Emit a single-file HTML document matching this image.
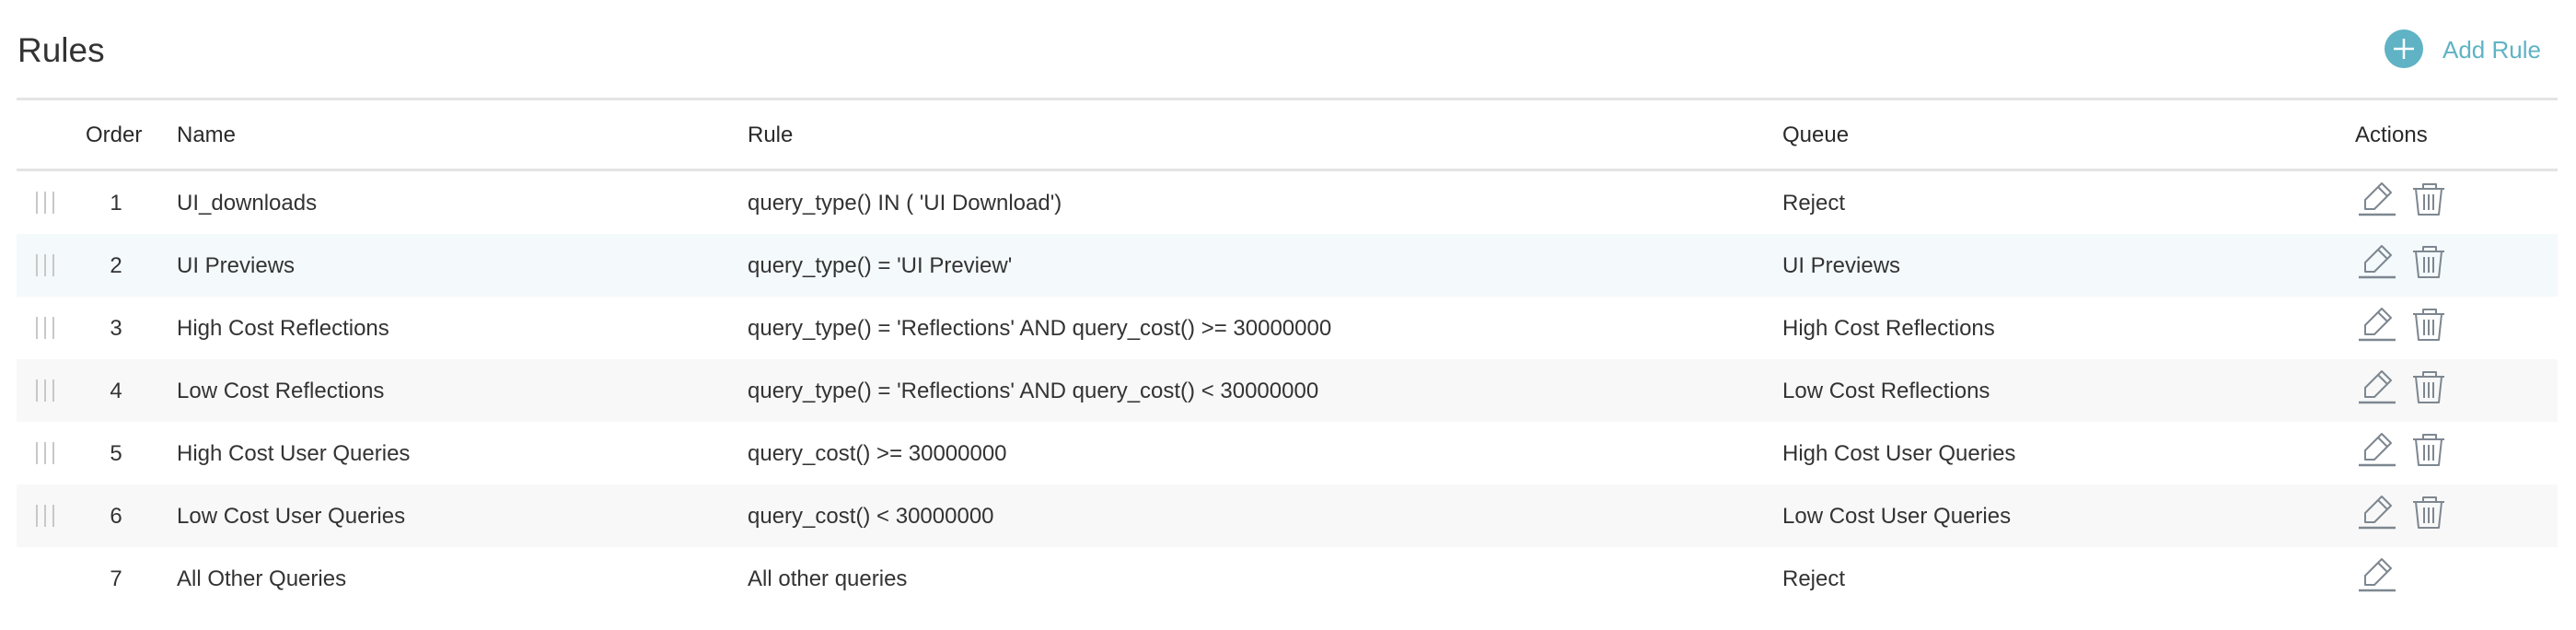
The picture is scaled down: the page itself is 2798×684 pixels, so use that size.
<!DOCTYPE html>
<html><head><meta charset="utf-8"><style>
*{margin:0;padding:0;box-sizing:border-box}
body{width:2798px;height:684px;background:#fff;position:relative;overflow:hidden;font-family:"Liberation Sans",Arial,sans-serif;color:#333}
.a{position:absolute;white-space:nowrap}
.t{font-size:37px;left:19px;top:34px;color:#333}
.line{position:absolute;left:18px;width:2760px;height:3px;background:#e4e4e4}
.h{font-size:24px;top:133px;color:#2a2a2a}
.row{position:absolute;left:18px;width:2760px;height:68px}
.c{font-size:24px;color:#333}
.drag{position:absolute;left:39px;width:20px;height:24px}
.drag i{position:absolute;top:0;width:2px;height:24px;background:#c8c8c8}
</style></head><body>
<div class="a t">Rules</div>
<svg class="a" style="left:2590px;top:32px" width="42" height="42" viewBox="0 0 42 42"><circle cx="21" cy="21" r="21" fill="#5fb3c4"/><path d="M21 10V32M10 21H32" stroke="#fff" stroke-width="2.5"/></svg>
<div class="a" style="left:2653px;top:39px;font-size:26px;color:#5fb3c4">Add Rule</div>
<div class="line" style="top:106px"></div>
<div class="line" style="top:183px"></div>
<div class="a h" style="left:93px">Order</div>
<div class="a h" style="left:192px">Name</div>
<div class="a h" style="left:812px">Rule</div>
<div class="a h" style="left:1936px">Queue</div>
<div class="a h" style="left:2558px">Actions</div>

<div class="row" style="top:254px;background:#f4f9fc"></div>
<div class="row" style="top:390px;background:#f8f8f8"></div>
<div class="row" style="top:526px;background:#f8f8f8"></div>

<div id="rows"></div>
<script>
var d=[["1","UI_downloads","query_type() IN ( 'UI Download')","Reject"],
["2","UI Previews","query_type() = 'UI Preview'","UI Previews"],
["3","High Cost Reflections","query_type() = 'Reflections' AND query_cost() >= 30000000","High Cost Reflections"],
["4","Low Cost Reflections","query_type() = 'Reflections' AND query_cost() < 30000000","Low Cost Reflections"],
["5","High Cost User Queries","query_cost() >= 30000000","High Cost User Queries"],
["6","Low Cost User Queries","query_cost() < 30000000","Low Cost User Queries"],
["7","All Other Queries","All other queries","Reject"]];
var h="";
function esc(s){return s.replace(/&/g,"&amp;").replace(/</g,"&lt;").replace(/>/g,"&gt;")}
var pencil='<path d="M0 36H40" stroke="#7d8790" stroke-width="2.5"/><path d="M7 20L25 2L35 12L17 30H7Z M21 6L31 16" fill="none" stroke="#7d8790" stroke-width="2" stroke-linejoin="round"/>';
var trash='<path d="M12 7V2H26V7 M1 7H35 M4 7L7 35H29L32 7 M13 13V30 M18 13V30 M23 13V30" fill="none" stroke="#7d8790" stroke-width="2" stroke-linejoin="round"/>';
for(var i=0;i<d.length;i++){
 var y=186+i*68, ty=y+21;
 if(i<6) h+='<div class="drag" style="top:'+(y+22)+'px"><i style="left:0"></i><i style="left:9px"></i><i style="left:18px"></i></div>';
 h+='<div class="a c" style="left:96px;width:60px;text-align:center;top:'+ty+'px">'+d[i][0]+'</div>';
 h+='<div class="a c" style="left:192px;top:'+ty+'px">'+esc(d[i][1])+'</div>';
 h+='<div class="a c" style="left:812px;top:'+ty+'px">'+esc(d[i][2])+'</div>';
 h+='<div class="a c" style="left:1936px;top:'+ty+'px">'+esc(d[i][3])+'</div>';
 h+='<svg class="a" style="left:2562px;top:'+(y+11)+'px" width="40" height="38" viewBox="0 0 40 38">'+pencil+'</svg>';
 if(i<6) h+='<svg class="a" style="left:2620px;top:'+(y+12)+'px" width="36" height="37" viewBox="0 0 36 37">'+trash+'</svg>';
}
document.getElementById("rows").innerHTML=h;
</script>
</body></html>
